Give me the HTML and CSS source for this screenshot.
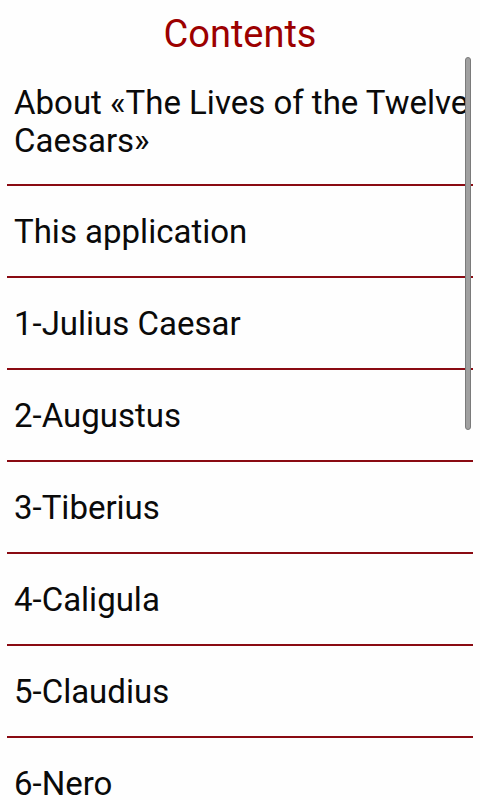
FILE: index.html
```html
<!DOCTYPE html>
<html>
<head>
<meta charset="utf-8">
<link rel="stylesheet" href="styles.css">
</head>
<body>
<div class="screen">
  <h1 class="title">Contents</h1>
  <ul class="toc">
    <li class="item first">About «The Lives of the Twelve Caesars»</li>
    <li class="item">This application</li>
    <li class="item">1-Julius Caesar</li>
    <li class="item">2-Augustus</li>
    <li class="item">3-Tiberius</li>
    <li class="item">4-Caligula</li>
    <li class="item">5-Claudius</li>
    <li class="item">6-Nero</li>
  </ul>
  <div class="scrollbar"></div>
</div>
</body>
</html>
```
FILE: styles.css
```css
html, body {
  margin: 0;
  padding: 0;
  background: #fefefe;
}
.screen {
  position: relative;
  width: 480px;
  height: 800px;
  overflow: hidden;
  font-family: Roboto, "Noto Sans", sans-serif;
}
.title {
  margin: 12px 0 0;
  font-size: 38px;
  font-weight: normal;
  line-height: 45px;
  text-align: center;
  color: #9c0000;
}
.toc {
  list-style: none;
  margin: 0 7px;
  padding: 0;
}
.item {
  padding: 27px 0 25px 7px;
  font-size: 33px;
  line-height: 38px;
  color: #0a0a0a;
  border-bottom: 2px solid #8a0a12;
  white-space: nowrap;
}
.item.first {
  padding-bottom: 24px;
  white-space: normal;
}
.scrollbar {
  position: absolute;
  left: 465px;
  top: 57px;
  width: 4px;
  height: 371px;
  background: #a0a0a0;
  border: 1px solid #7a7a7a;
  border-radius: 4px;
}
```
